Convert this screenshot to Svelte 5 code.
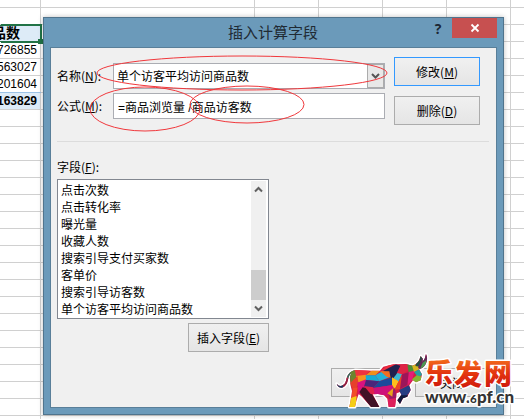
<script lang="ts">
	type SheetRow = { text: string; kind?: 'head' | 'total' };

	const values: Record<number, SheetRow> = {
		2: { text: '品数', kind: 'head' },
		3: { text: '726855' },
		4: { text: '563027' },
		5: { text: '201604' },
		6: { text: '163829', kind: 'total' }
	};

	const rows: SheetRow[] = Array.from({ length: 26 }, (_, i) => values[i] ?? { text: '' });

	const fields = [
		'点击次数',
		'点击转化率',
		'曝光量',
		'收藏人数',
		'搜索引导支付买家数',
		'客单价',
		'搜索引导访客数',
		'单个访客平均访问商品数'
	];

	let name = $state('单个访客平均访问商品数');
	let formula = $state('=商品浏览量 /商品访客数');
</script>

<main>
	<table class="sheet">
		<colgroup>
			<col class="first" />
			<col class="wide" />
			<col class="cell" />
			<col class="cell" />
			<col class="cell" />
			<col class="cell" />
			<col />
		</colgroup>
		<tbody>
			{#each rows as row, i}
				<tr class:short={i === 0}>
					<td class={row.kind}><div class="value">{row.text}</div></td>
					<td></td>
					<td></td>
					<td></td>
					<td></td>
					<td></td>
					<td></td>
				</tr>
			{/each}
		</tbody>
	</table>

	<section class="dialog" role="dialog" aria-labelledby="title">
		<header>
			<h1 id="title">插入计算字段</h1>
			<button class="help" aria-label="帮助">?</button>
			<button class="close" aria-label="关闭">
				<svg width="10" height="10" viewBox="0 0 10 10">
					<path d="M1.5 1.5l7 7M8.5 1.5l-7 7" stroke="#fff" stroke-width="1.8" />
				</svg>
			</button>
		</header>

		<div class="body">
			<div class="top">
				<div class="inputs">
					<div class="field">
						<label for="name">名称(<u>N</u>):</label>
						<div class="combo">
							<select id="name" bind:value={name}>
								{#each fields as field}
									<option>{field}</option>
								{/each}
							</select>
							<span class="arrow">
								<svg width="9" height="7" viewBox="0 0 9 7">
									<path d="M1 1l3.5 3.5L8 1" fill="none" stroke="#555" stroke-width="2" />
								</svg>
							</span>
						</div>
					</div>
					<div class="field">
						<label for="formula">公式(<u>M</u>):</label>
						<input id="formula" type="text" bind:value={formula} />
					</div>
				</div>
				<div class="actions">
					<button class="btn primary">修改(<u>M</u>)</button>
					<button class="btn">删除(<u>D</u>)</button>
				</div>
			</div>

			<hr />

			<div class="fields">
				<label for="list">字段(<u>F</u>):</label>
				<div class="listbox">
					<select id="list" size="8">
						{#each fields as field}
							<option>{field}</option>
						{/each}
					</select>
					<div class="scrollbar">
						<button aria-label="向上">
							<svg width="9" height="7" viewBox="0 0 9 7">
								<path d="M1 5.5L4.5 2 8 5.5" fill="none" stroke="#606060" stroke-width="2" />
							</svg>
						</button>
						<div class="thumb"></div>
						<button aria-label="向下">
							<svg width="9" height="7" viewBox="0 0 9 7">
								<path d="M1 1.5L4.5 5 8 1.5" fill="none" stroke="#606060" stroke-width="2" />
							</svg>
						</button>
					</div>
				</div>
				<button class="btn insert">插入字段(<u>E</u>)</button>
			</div>

			<footer>
				<button class="btn small">确定</button>
				<button class="btn small">关闭</button>
			</footer>
		</div>
	</section>

	<!-- red pen marks round the name and the two formula parts -->
	<svg class="marks" width="400" height="140" viewBox="0 0 400 140">
		<g fill="none" stroke="#f0383c" stroke-width="1">
			<ellipse cx="242" cy="73" rx="145" ry="17" />
			<ellipse cx="145" cy="109" rx="55" ry="22" />
			<ellipse cx="247" cy="104.5" rx="57" ry="18.5" />
		</g>
	</svg>

	<svg class="brand" width="204" height="79" viewBox="0 0 204 79">
		<defs>
			<linearGradient id="fire" x1="0" y1="0" x2="0" y2="1">
				<stop offset="0.15" stop-color="#f4701c" />
				<stop offset="0.55" stop-color="#e2320f" />
				<stop offset="1" stop-color="#c8120c" />
			</linearGradient>
			<path
				id="bull"
				d="M50 131Q58 142 68 136Q78 130 80 113Q87 94 106 90L150 92L180 92L190 80L220 73L258 72L278 77Q296 72 302 48L308 56L307 67Q316 57 318 42Q325 57 317 72Q310 85 297 88L306 103L302 121L288 127L279 121L268 136L272 150L262 170L249 175L240 192L232 181L244 164L240 156L230 160L228 176L225 201L206 201L202 176L192 166L174 162L158 163L178 201L153 201L126 170L116 162L109 183L105 201L88 201L92 181L96 153L92 137L90 119Q88 108 96 98Q87 103 84 119Q80 139 66 143Q54 144 50 131Z"
			/>
			<clipPath id="bull-clip"><use href="#bull" /></clipPath>
		</defs>

		<g transform="scale(0.3333)">
			<use href="#bull" fill="#fff" stroke="#fff" stroke-width="9" stroke-linejoin="round" />
			<use href="#bull" fill="#d51d45" />
			<g clip-path="url(#bull-clip)">
				<path d="M46 125h24v22H46z" fill="#173b5d" />
				<path d="M66 120l12-8 10 10-18 22z" fill="#8d2141" />
				<path d="M76 100l20-14 8 8-17 28z" fill="#2f7160" />
				<path d="M90 98l15-12 8 18-21 33z" fill="#6d842d" />
				<path d="M104 88l48 3-18 16-26 2z" fill="#ef3340" />
				<path d="M108 108l30-4 16 12-42 12z" fill="#f6951f" />
				<path d="M90 130l22-22 4 24-14 22z" fill="#e7402b" />
				<path d="M112 128l30-12-8 28-18 20z" fill="#db127f" />
				<path d="M98 145l15-3-4 25-16 22z" fill="#f24d28" />
				<path d="M92 174l18-6-3 36H84z" fill="#f4cd17" />
				<path d="M128 142l24 6 6 18 24 38h-28l-36-48z" fill="#421327" />
				<path d="M137 106l20-16 23 2-14 14z" fill="#f18f1b" />
				<path d="M137 106l29 0 12 18-40-4z" fill="#17acd4" />
				<path d="M138 120l40 4-18 20-28-4z" fill="#4a267b" />
				<path d="M132 138l28 4 6 22-14-2z" fill="#e0234b" />
				<path d="M166 106l24-14 18 20-30 12z" fill="#23b1d8" />
				<path d="M178 124l38-12 8 22-64 10z" fill="#1b4a9b" />
				<path d="M160 144l64-10-10 32-50-2z" fill="#ce127a" />
				<path d="M184 90l22-16 22-1-20 22z" fill="#ee2e3e" />
				<path d="M190 92l38-19 14 5-18 36-16 0z" fill="#21214e" />
				<path d="M180 93l28 1 4 20-12-4z" fill="#f26d21" />
				<path d="M242 76l20-4 4 18-22 16-14-6z" fill="#de2445" />
				<path d="M232 99l14 4-10 22-16-10z" fill="#3cb9d2" />
				<path d="M216 112l20 12-12 24-8-14z" fill="#ffbf1d" />
				<path d="M236 124l10-21 16 12-22 32-16 2z" fill="#ec4524" />
				<path d="M204 158l20-14 8 36-22 0z" fill="#9b1b67" />
				<path d="M204 178l26-4-3 30h-22z" fill="#dd205c" />
				<path d="M202 160l18-16-3 26z" fill="#e8a31d" />
				<path d="M262 72l20 4 2 18-18 4z" fill="#4d8c37" />
				<path d="M266 96l18-4-8 28-14 17z" fill="#e51c78" />
				<path d="M246 103l20-6-4 38-22 12z" fill="#9c165a" />
				<path d="M276 76l22-6 0 18-16 8z" fill="#d7b622" />
				<path d="M282 96l16-8 10 16-14 8z" fill="#28a1a0" />
				<path d="M276 118l14-12 16 4-4 18-16 2z" fill="#83b632" />
				<path d="M296 44h18v16l-16 20-12-2z" fill="#244f44" />
				<path d="M312 38h14v30l-22 20-10-4z" fill="#64285a" />
				<path d="M308 68l12-8-4 18-16 10z" fill="#4b9a52" />
				<path d="M238 150l28-14 10 15-24 24-10-10z" fill="#263d82" />
				<path d="M240 166l32 0-20 12-12 18-12-12z" fill="#101b3c" />
			</g>
		</g>

		<g class="brand-name" fill="url(#fire)">
			<text x="105" y="44">乐</text>
			<text x="134" y="45">发</text>
			<text x="164" y="44">网</text>
		</g>
		<text class="brand-url" x="105" y="63">www.<tspan class="six">6</tspan>pf.cn</text>
	</svg>
</main>

<style>
	:global(body) {
		margin: 0;
		background: #fff;
	}

	main {
		position: relative;
		height: 100vh;
		overflow: hidden;
		font-family: 'Noto Sans CJK SC', sans-serif;
		font-size: 12px;
		line-height: 16px;
		color: #000;
	}

	.sheet {
		width: 100%;
		table-layout: fixed;
		border-collapse: separate;
		border-spacing: 0;
	}

	.first {
		width: 41px;
	}

	.wide {
		width: 214px;
	}

	.cell {
		width: 64px;
	}

	td {
		box-sizing: border-box;
		height: 17px;
		padding: 0;
		border-right: 1px solid #d0d0d0;
		border-bottom: 1px solid #d0d0d0;
	}

	td:last-child {
		border-right: none;
	}

	.short td {
		height: 8px;
	}

	.short .value {
		height: 7px;
	}

	.value {
		display: flex;
		justify-content: flex-end;
		height: 16px;
		padding-right: 3px;
		overflow: hidden;
		font-family: 'Liberation Sans', 'Noto Sans CJK SC', sans-serif;
		white-space: nowrap;
	}

	.head {
		position: relative;
		border-color: #217346;
		background: #ddebf7;
		box-shadow:
			1px 1px #217346,
			1px -1px #217346,
			inset 0 1px #217346;
		font-size: 14px;
		font-weight: 700;
	}

	.head .value {
		padding-right: 20px;
	}

	.head::after {
		content: '';
		position: absolute;
		right: -3px;
		bottom: -3px;
		width: 5px;
		height: 5px;
		background: #217346;
	}

	.total {
		background: #ddebf7;
		box-shadow: 0 -1px #9bc2e6;
		font-weight: 700;
	}

	.dialog {
		position: absolute;
		top: 17px;
		left: 43px;
		right: 20px;
		border: 1px solid #50748d;
		background: #6b9aba;
		box-shadow: 0 0 5px rgba(0, 0, 0, 0.25);
	}

	header {
		display: flex;
		align-items: flex-start;
		height: 29px;
		padding-right: 6px;
	}

	h1 {
		flex: 1;
		margin: 0;
		padding-left: 78px;
		font-size: 15px;
		font-weight: 400;
		line-height: 28px;
		text-align: center;
		color: #1f2a33;
	}

	header button {
		display: flex;
		align-items: center;
		justify-content: center;
		height: 20px;
		padding: 0;
		border: none;
		background: none;
	}

	.help {
		width: 28px;
		font-family: 'Open Sans', sans-serif;
		font-size: 14px;
		font-weight: 700;
		color: #1c2733;
	}

	header .close {
		width: 45px;
		background: #c75050;
	}

	.body {
		margin: 0 6px 6px;
		padding: 9px 7px 10px 6px;
		border: 1px solid #597f99;
		background: #f0f0f0;
	}

	.top {
		display: flex;
		gap: 9px;
		padding-right: 9px;
	}

	.inputs {
		display: flex;
		flex: 1;
		flex-direction: column;
		gap: 4px;
		padding-top: 6px;
	}

	.field {
		display: flex;
		align-items: center;
	}

	.field label {
		width: 56px;
	}

	.combo,
	input {
		box-sizing: border-box;
		flex: 1;
		min-width: 0;
		height: 26px;
		border: 1px solid #abadb3;
		background: #fff;
	}

	.combo {
		display: flex;
	}

	input,
	select {
		padding: 0 3px;
		border-radius: 0;
		font: inherit;
		color: inherit;
		outline: none;
	}

	input {
		padding: 0 4px;
		font-family: 'Liberation Sans', 'Noto Sans CJK SC', sans-serif;
	}

	.combo select {
		flex: 1;
		min-width: 0;
		border: none;
		background: none;
		appearance: none;
	}

	.arrow {
		display: flex;
		align-items: center;
		justify-content: center;
		width: 15px;
		border: 1px solid #acacac;
		background: #e8e8e8;
	}

	.actions {
		display: flex;
		flex-direction: column;
		gap: 10px;
		width: 86px;
	}

	.btn {
		box-sizing: border-box;
		height: 29px;
		padding: 0;
		border: 1px solid #acacac;
		background: linear-gradient(#f0f0f0, #e5e5e5);
		font: inherit;
		color: inherit;
	}

	.primary {
		border-color: #3399ff;
	}

	hr {
		height: 1px;
		margin: 16px 0 17px;
		border: none;
		background: #dcdcdc;
	}

	.fields {
		display: flex;
		flex-direction: column;
		gap: 4px;
		width: 212px;
	}

	.listbox {
		display: flex;
		box-sizing: border-box;
		height: 140px;
		padding: 1px 2px 1px 0;
		border: 1px solid #828790;
		background: #fff;
	}

	.listbox select {
		flex: 1;
		min-width: 0;
		height: 136px;
		border: none;
		background: none;
		overflow: hidden;
		scrollbar-width: none;
	}

	.listbox option {
		min-height: 17px;
		height: 17px;
		padding: 0;
		line-height: 17px;
	}

	.scrollbar {
		display: flex;
		flex-direction: column;
		width: 15px;
		background: #f0f0f0;
	}

	.scrollbar button {
		display: flex;
		align-items: center;
		justify-content: center;
		height: 17px;
		padding: 0;
		border: none;
		background: none;
	}

	.thumb {
		height: 30px;
		margin-top: auto;
		background: #cdcdcd;
	}

	.insert {
		align-self: flex-end;
		width: 81px;
	}

	footer {
		display: flex;
		justify-content: flex-end;
		gap: 10px;
		margin-top: 16px;
	}

	.small {
		width: 74px;
	}

	.marks {
		position: absolute;
		top: 0;
		left: 0;
		pointer-events: none;
	}

	.brand {
		position: absolute;
		right: 0;
		bottom: 0;
		pointer-events: none;
	}

	.brand text {
		stroke: #fff;
		stroke-width: 3px;
		stroke-linejoin: round;
		paint-order: stroke;
	}

	.brand-name {
		font-size: 28px;
		font-weight: 900;
	}

	.brand-url {
		font-family: Lato, sans-serif;
		font-size: 17px;
		font-weight: 900;
		fill: #333;
	}

	.six {
		font-size: 12px;
	}
</style>
